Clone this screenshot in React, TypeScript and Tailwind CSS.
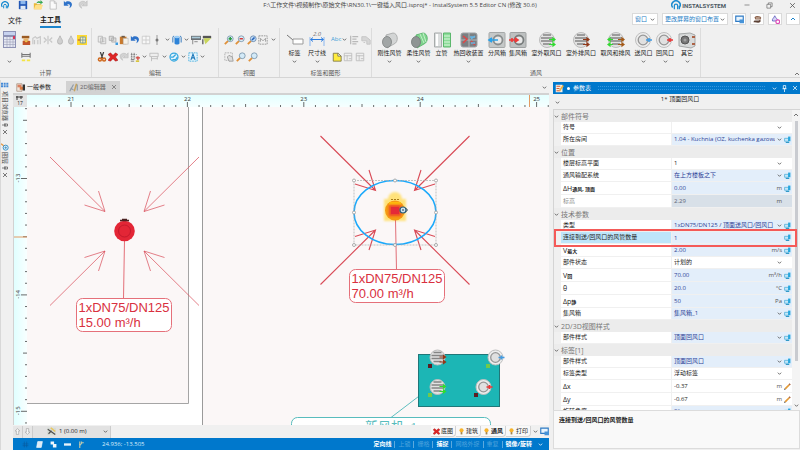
import type { ReactNode } from "react";

const glyphs: Record<string, ReactNode> = {
  chevron: <path d="M2 4l4 4 4-4" fill="none" stroke="#555" strokeWidth="2" />,
  chevronLight: <path d="M2 4l4 4 4-4" fill="none" stroke="#e8f4fc" strokeWidth="2" />,
  up: <path d="M2 8l4-4 4 4" fill="none" stroke="#1c84cc" strokeWidth="2" />,
  save: (
    <>
      <path d="M1 1h10v10H1z" fill="#2257b5" />
      <path d="M3 1h6v4H3z" fill="#8db8ec" />
      <path d="M3 7h6v4H3z" fill="#dfe9f5" />
    </>
  ),
  open: (
    <>
      <path d="M1 4h3l1 1h5v6H1z" fill="#e9b93a" />
      <path d="M1 11l2-5h9l-2 5z" fill="#ffe08a" />
      <path d="M4 4c1-3 4-3 5-2V0l3 3-3 2V4C7 3 6 3 4 4z" fill="#36a852" />
    </>
  ),
  doc: <path d="M2.500 1h5l2.500 2.500V11H2.500zM7.500 1v3H10" fill="#fafafa" stroke="#bdbdbd" />,
  undo: <path d="M1 1v6h6L5 5.500c2.500-1.500 4.500.5 2.500 4.500 5-3 4-8.500-1.500-8.500-1.500 0-2.500.6-3.300 1.500z" fill="#2e72c9" />,
  redo: <path d="M11 1v6H5l2-1.500C4.500 4 2.500 6 4.500 10c-5-3-4-8.500 1.500-8.500 1.500 0 2.500.6 3.300 1.500z" fill="#d2d2d2" stroke="#b5b5b5" strokeWidth=".6" />,
  copy: (
    <g fill="#ececec" stroke="#b5b5b5">
      <path d="M1.500 1.500h5v7h-5zM4.500 3.500h6v7h-6z" />
      <path d="M6 6h3M6 8h3" />
    </g>
  ),
  copyAdd: (
    <>
      <path d="M1.500 1.500h5v5h-5zM4.500 3.500h5v5h-5z" fill="#dcdcdc" stroke="#a9a9a9" />
      <path d="M9 9h3v3H9z" fill="#3c9be0" />
    </>
  ),
  paste: (
    <>
      <path d="M1 2h8v9H1z" fill="#c9792b" />
      <path d="M3 1h4v2H3z" fill="#6b5b4b" />
      <path d="M5 4h6v7H5z" fill="#f5f1e8" stroke="#999" strokeWidth=".5" />
    </>
  ),
  panes: <path d="M1.500 1.500h9v9h-9zM6 1v10M2 6h8" fill="#f7f7f7" stroke="#c8c8c8" />,
  node: (
    <>
      <path d="M6 0v12" stroke="#8a8a8a" />
      <circle cx="6" cy="6" r="1.800" fill="#777" />
    </>
  ),
  cylinder: (
    <>
      <path d="M3 2h6v8c0 2-6 2-6 0z" fill="#2d83d8" />
      <ellipse cx="6" cy="2.500" rx="3" ry="1.500" fill="#9bcdf6" />
      <path d="M1 3l1-2M11 3l-1-2M1 3v6M11 3v6" stroke="#1565b5" />
    </>
  ),
  roller: (
    <>
      <path d="M0 1h12v5H0z" fill="#6a7074" />
      <path d="M1 2h10v2H1z" fill="#aac9d8" />
      <path d="M2 6v5M4 8h4" stroke="#a0a0a0" strokeWidth="1.500" />
    </>
  ),
  funnel: (
    <>
      <path d="M1 1h10v3H1z" fill="#555" />
      <path d="M2 4h9l-7 7z" fill="#c9d65b" />
      <path d="M1 5v6" stroke="#555" strokeWidth="1.500" />
    </>
  ),
  cut: (
    <>
      <path d="M4 0l3 8M8 0L5 8" stroke="#404040" strokeWidth="1.500" />
      <circle cx="3.500" cy="9" r="1.800" fill="none" stroke="#cf6a1f" strokeWidth="1.800" />
      <circle cx="8.500" cy="9" r="1.800" fill="none" stroke="#cf6a1f" strokeWidth="1.800" />
    </>
  ),
  erase: <path d="M0 3l3-2 3 3 3-3 3 2-3 3 3 4-3 1-3-3-3 3-3-1 3-4z" fill="#df2525" stroke="#8f1111" strokeWidth=".5" />,
  grid: (
    <>
      <path d="M1 3h7M1 6h7M2 1v8M5 1v8" stroke="#777" strokeDasharray="2 1" />
      <path d="M7 7h5M9.500 5v5" stroke="#d2423a" strokeWidth="1.500" />
      <path d="M7 10h4v2H7z" fill="#d8c53d" />
      <path d="M1 9h4M1 11h4" stroke="#888" strokeWidth="1.200" />
    </>
  ),
  align: <path d="M1 1.500h10v4H1zM3 8h7M3 6v5M10 6v3" fill="#eee" stroke="#b8b8b8" />,
  edit: (
    <>
      <circle cx="6" cy="6" r="4.800" fill="#e4f4fc" stroke="#35a7df" strokeWidth="1.500" />
      <path d="M2 6h3l3-3M4 9h4l2-3" fill="none" stroke="#35a7df" strokeWidth="1.500" />
    </>
  ),
  selectA: (
    <>
      <path d="M1 1h10v10H1z" fill="#e5f5fd" stroke="#3aaade" strokeDasharray="2 1" />
      <path d="M3.500 9.500L6 2.500l2.500 7M4.500 7h3" fill="none" stroke="#1976b8" strokeWidth="1.300" />
    </>
  ),
  zoomIn: (
    <>
      <path d="M5 7l-4 4" stroke="#e0913a" strokeWidth="2.200" />
      <circle cx="7.500" cy="4.500" r="3.500" fill="#d9edf8" stroke="#7894aa" />
      <path d="M5.500 4.500h4M7.500 2.500v4" stroke="#2a9a43" strokeWidth="1.800" />
    </>
  ),
  zoomOut: (
    <>
      <path d="M5 7l-4 4" stroke="#e0913a" strokeWidth="2.200" />
      <circle cx="7.500" cy="4.500" r="3.500" fill="#d9edf8" stroke="#7894aa" />
      <path d="M5.500 4.500h4" stroke="#d43a3a" strokeWidth="1.800" />
    </>
  ),
  zoomAll: (
    <>
      <path d="M5 7l-4 4" stroke="#e0913a" strokeWidth="2.200" />
      <circle cx="7.500" cy="4.500" r="3.500" fill="#bfdcf8" stroke="#6a88ab" />
      <path d="M6 6l3-3" stroke="#2763b8" strokeWidth="2" />
    </>
  ),
  zoom: (
    <>
      <path d="M5 7l-4 4" stroke="#e0913a" strokeWidth="2.200" />
      <circle cx="7.500" cy="4.500" r="3.500" fill="#d3eaf8" stroke="#7894aa" />
    </>
  ),
  frame: (
    <>
      <path d="M1 1h10v10H1z" fill="none" stroke="#8b8b8b" strokeDasharray="2 1" />
      <path d="M3 8V4l3 3 3-3v4" fill="none" stroke="#9a9a9a" />
    </>
  ),
  hand: (
    <>
      <path d="M1 1h9v9H1z" fill="none" stroke="#aaa" strokeDasharray="2 1" />
      <path d="M4 6l2-2 4 2 1 5H6z" fill="#ddd" stroke="#999" />
    </>
  ),
  person: (
    <>
      <path d="M1 1h9v3H1z" fill="#9b5b24" />
      <path d="M3 4h6v3H3z" fill="#e8b26a" />
      <path d="M2 7h9v5H2z" fill="#c0542c" />
      <path d="M4 7l2 2 3-2" fill="#f3d04d" />
    </>
  ),
  building: <path d="M1 11V4l3-2 2 2 4-2v9M3 6v5M7 6v5" fill="#ececec" stroke="#c6c6c6" strokeWidth="1.300" />,
  cross: <path d="M1 3l3 3-3 3M11 3L8 6l3 3M6 1v10" fill="none" stroke="#c8c8c8" strokeWidth="1.500" />,
  drop: <path d="M6 1c1 3 3 4 3 7a3 3 0 01-6 0c0-3 2-4 3-7z" fill="#d0d0d0" stroke="#b2b2b2" />,
  network: (
    <>
      <path d="M0 0h12v12H0z" fill="#ffd92e" />
      <path d="M4 2.500h6v7H4zM1 6h10M7 2v8" fill="#fff3ba" stroke="#6f97a6" />
      <path d="M1 6h3" stroke="#e06d24" strokeWidth="1.500" />
    </>
  ),
  gauge: (
    <>
      <path d="M1 1v6M11 1v6M1 3h10M1 5h10" stroke="#777" strokeWidth="1.300" />
      <path d="M1 9h4v2H1zM7 9h4v2H7z" fill="#f4e445" />
    </>
  ),
  note: <path d="M1.500 1.500h6L11 5v6H1.500zM7 1.500V5h4" fill="#ffec3d" stroke="#777148" />,
  list: <path d="M2 1v10M4 2h7M4 5h5M4 8h7M4 10.500h5" fill="none" stroke="#b9b9b9" strokeWidth="1.500" />,
  shapeGrey: <path d="M1 2h5l5 4v5H7V7H1zM3 9h2" fill="#d6d6d6" stroke="#c0c0c0" />,
  panelGrey: <path d="M1.500 1.500h9v9h-9zM1.500 4.500h9M5 4v6M7 8h3" fill="#efefef" stroke="#bababa" />,
  screen: (
    <>
      <path d="M1 1.500h10v7H1z" fill="#e8f4fd" stroke="#2f7ac4" strokeWidth="1.500" />
      <path d="M6 6h6v5H6z" fill="#4693d8" />
    </>
  ),
  scroll: (
    <>
      <path d="M2 3c2-3 9-2 9 1l-1 2H3z" fill="#8e654f" />
      <path d="M1 8c3-2 6 1 9-2v3c-3 3-6 0-9 1z" fill="#5b4034" />
      <path d="M4 4h5" stroke="#f0e4da" />
    </>
  ),
  paint: (
    <>
      <path d="M5 1c1 3 4 4 4 7H2c-1-3 2-4 3-7z" fill="#d7d5f5" stroke="#5350b8" />
      <circle cx="9" cy="9" r="2.500" fill="#fff" stroke="#dd4bb5" strokeWidth="1.500" />
    </>
  ),
  params: (
    <>
      <path d="M1 1h7v10H1z" fill="#efe5dd" stroke="#a89080" />
      <path d="M2 3h5M2 5h5" stroke="#d55e36" strokeWidth="1.500" />
      <path d="M5 5h5v4H5z" fill="#d97b43" />
      <path d="M9 2h3v8H9z" fill="#333" />
    </>
  ),
  form: (
    <>
      <path d="M1 1h9v10H1z" fill="#f6efe4" />
      <path d="M2 3h5M2 6h4M2 9h5" stroke="#d65b35" strokeWidth="1.500" />
      <path d="M11 2L6 9" stroke="#f3b13b" strokeWidth="2" />
    </>
  ),
  compass: (
    <>
      <path d="M1 11L6 2M2 7l4 2" fill="none" stroke="#8d99a5" strokeWidth="1.500" />
      <path d="M10 1L7 11" stroke="#c9a35d" strokeWidth="2" />
      <path d="M11 2v8" stroke="#64809b" />
    </>
  ),
  tableGrid: <path d="M0 1h3v3H0zM4 1h3v3H4zM8 1h3v3H8zM0 5h3v3H0zM4 5h3v3H4zM8 5h3v3H8z" fill="#4389d6" />,
  search: (
    <>
      <path d="M0 1l4 3" stroke="#e5953c" strokeWidth="2" />
      <circle cx="7" cy="7" r="3.800" fill="#e4f3fb" stroke="#3f93c7" strokeWidth="1.500" />
      <path d="M5 7h4M7 5v4" stroke="#3282b8" />
    </>
  ),
  pin: <path d="M4 1h4v5H4zM2.500 6.500h7M6 7v5" fill="none" stroke="currentColor" strokeWidth="1.300" />,
  close: <path d="M2 2l8 8M10 2l-8 8" stroke="currentColor" strokeWidth="1.400" />,
  min: <path d="M1 6h10" stroke="#555" strokeWidth="1.200" />,
  max: <path d="M1.500 4h6.500v6.500H1.500zM4 4V1.500h6.500V8H8" fill="none" stroke="#555" />,
  arrowUp: <path d="M6 1l4 4H8v6H4V5H2z" fill="#f6f6f6" stroke="#999" />,
  arrowDown: <path d="M6 11L2 7h2V1h4v6h2z" fill="#f6f6f6" stroke="#999" />,
  layer: (
    <>
      <path d="M0 1h12v10H0z" fill="#d7dcd7" />
      <path d="M1 3l10 7M2 9l4-4" stroke="#4d4d4d" strokeWidth="1.500" />
      <path d="M5 1l6 5" stroke="#ebc65c" strokeWidth="2" />
    </>
  ),
  bulb: (
    <>
      <circle cx="6" cy="4" r="3.500" fill="#f7b32c" />
      <path d="M4.500 7h3v4h-3z" fill="#a5854a" />
    </>
  ),
  link: (
    <>
      <path d="M1 4h7v5H1z" fill="#c7e9f9" stroke="#41a8d7" strokeWidth="1.200" />
      <path d="M7 1h4v8H7z" fill="#27a7de" />
      <path d="M3 11h6" stroke="#2794c4" strokeWidth="1.800" />
    </>
  ),
  pencil: (
    <>
      <path d="M2 10l7-7" stroke="#e49a35" strokeWidth="3" />
      <path d="M9 3l1.500-1.500" stroke="#a35a3a" strokeWidth="3" />
      <path d="M0 12l1-3 2 2z" fill="#555" />
    </>
  ),
  sheet: <path d="M3 1h8L9 11H1z" fill="#dcebf7" stroke="#fff" />,
  objects: <path d="M1 1h6v5H1zM5 5h6v6H5z" fill="#eef6fc" />,
  pill: <path d="M0 4h12v4H0z" fill="#e9f3fa" />,
  branch: <path d="M3 1v11M3 8l4-5h3M6 1v4" fill="none" stroke="#b9c5ad" strokeWidth="2" />,
  hash: <path d="M4 1v10M8 1v10M1 5h10M1 8h10" stroke="#075a9c" />,
};

function Icon({ name, className = "size-[9px]" }: { name: string; className?: string }) {
  return (
    <svg viewBox="0 0 12 12" className={`${className} shrink-0`} aria-hidden="true">
      {glyphs[name]}
    </svg>
  );
}

function Tick({ x, y, color, left = false }: { x: number; y: number; color: string; left?: boolean }) {
  return (
    <path
      d={left ? `M${x + 5} ${y}h-4M${x} ${y}l2-1.500v3z` : `M${x - 3} ${y}h5M${x + 3} ${y}l-2-1.500v3z`}
      fill={color}
      stroke={color}
      strokeWidth="1.200"
    />
  );
}

function Grille({ x, y, right, left }: { x: number; y: number; right?: string; left?: string }) {
  return (
    <g>
      <circle cx={x} cy={y} r="7.500" fill="#e2e2e2" stroke="#bcbcbc" />
      <path
        d={`M${x - 4} ${y - 5}h8M${x - 6} ${y - 2}h12M${x - 6} ${y + 1}h12M${x - 4} ${y + 4}h8`}
        stroke="#858585"
        strokeWidth="1.400"
      />
      {right && <Tick x={x + 5} y={y - 0.5} color={right} />}
      {right && <Tick x={x + 5} y={y + 4.5} color={right} />}
      {left && <Tick x={x - 8} y={y - 0.5} color={left} left />}
      {left && <Tick x={x - 8} y={y + 4.5} color={left} left />}
    </g>
  );
}

function Ring({ x, y, color }: { x: number; y: number; color: string }) {
  return (
    <g>
      <circle cx={x} cy={y} r="7.500" fill="#ededed" stroke="#bfbfbf" />
      <circle cx={x} cy={y} r="4.800" fill="#e0e0e0" stroke="#969696" strokeWidth="1.300" />
      <path d={`M${x + 3} ${y}h6M${x + 6} ${y - 2}v4`} stroke={color} strokeWidth="1.600" />
    </g>
  );
}

const devices: { label: string; width: string; menu?: boolean; art: ReactNode }[] = [
  {
    label: "刚性风管", width: "w-[29px]", menu: true,
    art: (
      <>
        <path d="M5 4l7-2c5 0 6 9 1 11l-7 4z" fill="#d3d5d5" stroke="#a1a3a3" strokeWidth=".8" />
        <ellipse cx="6" cy="11" rx="4.500" ry="5.500" fill="#a2a6a6" stroke="#7e8282" strokeWidth=".8" />
      </>
    ),
  },
  {
    label: "柔性风管", width: "w-[29px]", menu: true,
    art: (
      <>
        <path d="M6 4l7-2c5 0 6 9 1 11l-7 4z" fill="#7fd48e" stroke="#4fae63" strokeWidth=".8" />
        <path d="M10 3l4 9M13 2l3 9" stroke="#c2f0c7" />
        <ellipse cx="6" cy="11" rx="4.500" ry="5.500" fill="#8f9594" stroke="#737877" strokeWidth=".8" />
      </>
    ),
  },
  {
    label: "立管", width: "w-[17px]",
    art: (
      <>
        <path d="M1.500 2h7v14h-7z" fill="#dcdfdf" stroke="#a7abab" />
        <path d="M10.500 2h7v14h-7z" fill="#8bdc98" stroke="#5cb76d" />
        <path d="M11 5h6M11 8h6M11 11h6M11 14h6" stroke="#daf6dc" />
        <path d="M4 3v12" stroke="#fff" strokeWidth="2" />
      </>
    ),
  },
  {
    label: "热回收装置", width: "w-[37px]", menu: true,
    art: (
      <>
        <rect x="1" y="2" width="16" height="14" rx="2" fill="#7c8083" stroke="#9da1a4" />
        <path d="M9 2v14M1 9h16" stroke="#b4b7b9" />
        <path d="M3 5l4 3-4 4M15 14l-4-4" fill="none" stroke="#e24545" strokeWidth="1.500" />
        <path d="M15 5l-4 3M10 6h5M11 12h4" stroke="#66b5e5" strokeWidth="1.500" />
      </>
    ),
  },
  {
    label: "分风箱", width: "w-5",
    art: (
      <>
        <rect x="1" y="1.500" width="16" height="15" rx="1" fill="#c5c8c8" stroke="#a5a8a8" />
        <circle cx="10" cy="9" r="4.500" fill="#e8e8e8" stroke="#898d8d" strokeWidth="1.800" />
        <path d="M10 9H1M4 7L1 9l3 2" fill="none" stroke="#27a0e8" strokeWidth="1.600" />
      </>
    ),
  },
  {
    label: "集风箱", width: "w-[22px]",
    art: (
      <>
        <rect x="1" y="1.500" width="16" height="15" rx="1" fill="#bdc0c0" stroke="#9fa2a2" />
        <circle cx="10" cy="9" r="4.500" fill="#e8e8e8" stroke="#797d7d" strokeWidth="1.800" />
        <path d="M0 9h9M6 7l3 2-3 2M3 7v4" fill="none" stroke="#ee3737" strokeWidth="1.600" />
      </>
    ),
  },
  { label: "室外取风口", width: "w-[35px]", art: <Grille x={9} y={9} right="#2fdc2f" /> },
  { label: "室外排风口", width: "w-[34px]", art: <Grille x={9} y={9} right="#91391a" /> },
  { label: "取风和排风", width: "w-[35px]", art: <Grille x={9} y={9} left="#35d833" right="#a45a18" /> },
  { label: "送风口", width: "w-[21px]", menu: true, art: <Ring x={8} y={9} color="#429be2" /> },
  { label: "回风口", width: "w-[22px]", menu: true, art: <Ring x={8} y={9} color="#ec3434" /> },
  {
    label: "其它", width: "w-[22px]", menu: true,
    art: (
      <>
        <path d="M1 3l11-1 5 2v11l-4 2-12-2z" fill="#d8dada" stroke="#a5a8a8" />
        <circle cx="7" cy="9" r="4" fill="#777" stroke="#555" />
        <circle cx="7" cy="9" r="1.500" fill="#a2a2a2" />
        <path d="M14 6h3M14 13h3" stroke="#ad6346" strokeWidth="1.800" />
      </>
    ),
  },
];

function isMenu(name: string) {
  return name.startsWith("chevron");
}

function ToolRow({ names, className }: { names: string[]; className: string }) {
  return (
    <div className={`flex h-[17px] items-center justify-between ${className}`}>
      {names.map((name, i) => (
        <button
          key={i}
          aria-label={name}
          className={isMenu(name) ? "flex w-2 justify-center" : "flex w-[11px] justify-center"}
        >
          <Icon name={name} className={isMenu(name) ? "size-[5px]" : "size-[10px]"} />
        </button>
      ))}
    </div>
  );
}

function Group({ title, className, children }: { title: string; className: string; children: ReactNode }) {
  return (
    <section className={`flex shrink-0 flex-col border-r border-[#dcdcdc] ${className}`}>
      <div className="flex flex-1 pt-[3px]">{children}</div>
      <h2 className="h-2 text-center text-[6px] leading-2 text-[#555]">{title}</h2>
    </section>
  );
}

function Ribbon() {
  return (
    <div className="flex h-[50px] shrink-0 border-b border-[#d5d5d5] bg-[#f0f0f0]">
      <Group title="计算" className="w-[92px]">
        <button aria-label="计算" className="flex w-[18px] flex-col items-center pl-px">
          <svg viewBox="0 0 13 17" className="h-[17px] w-[13px]">
            <path d="M0 0h13v17H0z" fill="#8d92b5" />
            <path d="M1 1h11v3H1z" fill="#c7d2ef" />
            <path d="M1 6h11v10H1z" fill="#e4e7f2" />
            <path d="M1 8.500h11M1 11h11M1 13.500h11M4 6v10M7 6v10M10 6v10" stroke="#9ba0b7" strokeWidth=".6" />
            <path d="M10 5h2v3h-2z" fill="#d7375a" />
          </svg>
          <Icon name="chevron" className="mt-[11px] size-[5px]" />
        </button>
        <div className="pl-[2px]">
          <ToolRow names={["person", "building", "cross", "drop", "drop", "network"]} className="w-[68px]" />
          <ToolRow names={["gauge"]} className="w-[11px]" />
        </div>
      </Group>
      <Group title="编辑" className="w-[127px]">
        <div className="pl-1">
          <ToolRow
            names={["copy", "copyAdd", "paste", "undo", "panes", "node", "chevron", "cylinder", "chevron", "roller", "funnel"]}
            className="w-[117px]"
          />
          <ToolRow
            names={["cut", "erase", "redo", "grid", "chevron", "align", "chevron", "edit", "chevron", "selectA", "chevron"]}
            className="w-[111px]"
          />
        </div>
      </Group>
      <Group title="视图" className="w-[61px]">
        <div className="pl-1">
          <ToolRow names={["zoomIn", "zoomOut", "zoomAll", "frame", "chevron"]} className="w-[54px]" />
          <ToolRow names={["hand", "zoom", "zoom"]} className="w-[35px]" />
        </div>
      </Group>
      <Group title="标签和图形" className="w-[92px]">
        <button className="flex w-[28px] flex-col items-center pl-[2px] text-[6px] leading-2">
          <svg viewBox="0 0 18 18" className="size-[18px]">
            <path d="M1 4l6 5" stroke="#777" />
            <path d="M7 8h10v5H7z" fill="#fff" stroke="#9a9a9a" />
          </svg>
          标签
          <Icon name="chevron" className="mt-[2px] size-[5px]" />
        </button>
        <button className="flex w-5 shrink-0 flex-col items-center whitespace-nowrap text-[6px] leading-2">
          <svg viewBox="0 0 18 18" className="size-[18px]">
            <text x="5" y="5" fontSize="6" fontStyle="italic" fill="#777">2.0</text>
            <path d="M2 6v9M16 6v9" stroke="#8ab6ee" />
            <path d="M3 8.500h12M5 6.500l-2.500 2 2.500 2M13 6.500l2.500 2-2.500 2" fill="none" stroke="#2b7de0" />
          </svg>
          尺寸线
          <Icon name="chevron" className="mt-[2px] size-[5px]" />
        </button>
        <div className="pl-1">
          <div className="flex items-center">
            <button className="flex w-[17px] items-center gap-px text-[6px] text-[#3f9fd8]">
              Abc <Icon name="chevron" className="size-[5px]" />
            </button>
            <ToolRow names={["list", "shapeGrey"]} className="w-[23px]" />
          </div>
          <ToolRow names={["note", "panelGrey", "panelGrey"]} className="w-[34px]" />
        </div>
      </Group>
      <Group title="通风" className="w-[329px]">
        <div className="flex pl-[3px]">
          {devices.map((d) => (
            <button key={d.label} className={`flex shrink-0 flex-col items-center whitespace-nowrap text-[6px] leading-2 ${d.width}`}>
              <svg viewBox="0 0 18 18" className="size-[18px] overflow-visible">{d.art}</svg>
              {d.label}
              {d.menu && <Icon name="chevron" className="mt-[2px] size-[5px]" />}
            </button>
          ))}
        </div>
      </Group>
      <div className="flex flex-1 items-end justify-end">
        <button aria-label="折叠"><Icon name="up" className="size-[6px] grayscale" /></button>
      </div>
    </div>
  );
}

function Logo({ className }: { className: string }) {
  return (
    <svg viewBox="0 0 12 12" className={className} aria-hidden="true">
      <path d="M2 9a5 5 0 118 0" fill="none" stroke="#1b8bd0" strokeWidth="1.800" />
      <path d="M4 11V7a2 2 0 014 0v4M10 7v4" fill="none" stroke="#1b8bd0" strokeWidth="1.500" />
    </svg>
  );
}

function TitleBar() {
  return (
    <header className="relative flex h-[10px] shrink-0 items-center justify-between pl-px pr-1">
      <div className="flex items-center gap-[5px]">
        <Logo className="mr-1 size-2" />
        {["save", "open", "doc", "undo", "redo"].map((name) => (
          <button key={name} aria-label={name}><Icon name={name} className="size-[10px]" /></button>
        ))}
      </div>
      <h1 className="absolute inset-x-0 text-center text-[6px] leading-[9px] text-[#444]">
        F:\工作文件\视频制作\原始文件\RN30.1\一键插入风口.isproj* - InstalSystem 5.5 Editor CN (修改 30.6)
      </h1>
      <div className="flex items-center">
        <Logo className="size-[10px]" />
        <span className="mr-[18px] pl-px font-['Roboto',sans-serif] text-[6px] font-bold text-[#4d5963]">INSTALSYSTEM</span>
        <div className="flex gap-4 text-[#555]">
          <button aria-label="最小化"><Icon name="min" className="size-[6px]" /></button>
          <button aria-label="还原"><Icon name="max" className="size-[7px]" /></button>
          <button aria-label="关闭"><Icon name="close" className="size-[7px]" /></button>
        </div>
      </div>
    </header>
  );
}

function MenuBar() {
  return (
    <nav className="flex h-[18px] shrink-0 items-center justify-between pl-2 text-[7px]">
      <div className="flex gap-[18px] self-stretch">
        <button className="pt-[2px]">文件</button>
        <button className="border-b-2 border-[#1c84cc] pt-[2px] font-bold">主工具</button>
      </div>
      <div className="flex h-3 gap-1 text-[6px] text-[#1c7cc4]">
        <button className="flex items-center gap-[3px] border border-[#dadada] bg-white px-[2px]">
          窗口 <Icon name="chevron" className="size-[5px]" />
        </button>
        <button className="flex items-center gap-px border border-[#dadada] bg-white px-[2px]">
          更改屏幕的窗口布置 <Icon name="chevron" className="size-[5px]" />
        </button>
        {["screen", "scroll", "paint", "up"].map((name) => (
          <button key={name} aria-label={name} className="flex w-[14px] items-center justify-center border border-[#dadada] bg-white">
            <Icon name={name} className={name === "up" ? "size-[6px]" : "size-[9px]"} />
          </button>
        ))}
      </div>
    </nav>
  );
}

function SideRail() {
  return (
    <aside className="flex w-[13px] shrink-0 flex-col items-center border-l border-[#d8d8d8] pr-1 pt-[2px] text-[#444]">
      {[
        { icon: "tableGrid", label: "项目浏览器" },
        { icon: "search", label: "图层" },
      ].map((tab) => (
        <div key={tab.label} className="mb-2 flex flex-col items-center gap-px">
          <Icon name={tab.icon} className="size-2" />
          <button className="text-[6px] leading-2 [text-orientation:sideways] [writing-mode:vertical-rl]">{tab.label}</button>
          <Icon name="pin" className="size-[6px] rotate-90" />
          <button aria-label={`关闭${tab.label}`}><Icon name="close" className="size-[6px]" /></button>
        </div>
      ))}
    </aside>
  );
}

const unit = 116.4;

function TopRuler() {
  const ticks = Array.from({ length: 46 }, (_, i) => i - 3);
  return (
    <svg viewBox="27 95 522 12" preserveAspectRatio="xMinYMin slice" className="h-3 min-w-0 flex-1 bg-linear-to-b from-[#e4ffff] to-[#f6ffff]">
      {ticks.map((i) => {
        const x = 71 + (i * unit) / 10;
        const size = i % 10 === 0 ? 5 : i % 5 === 0 ? 3 : 2;
        return <path key={i} d={`M${x} ${107 - size}v${size}`} stroke="#444" strokeWidth=".8" />;
      })}
      {[21, 22, 23, 24, 25].map((n, i) => (
        <text key={n} x={71 + i * unit} y="101" fontSize="6" textAnchor="middle" fill="#333">{n}</text>
      ))}
      <path d="M529.500 95v12" stroke="#e39a62" />
    </svg>
  );
}

function LeftRuler() {
  const ticks = Array.from({ length: 28 }, (_, i) => i - 6);
  return (
    <svg viewBox="14 107 13 318" preserveAspectRatio="xMinYMin slice" className="w-[13px] shrink-0 bg-linear-to-r from-[#e0ffff] to-[#f8ffff]">
      {ticks.map((i) => {
        const y = 178.5 + (i * unit) / 10;
        const size = i % 10 === 0 ? 6 : i % 5 === 0 ? 4 : 2;
        return <path key={i} d={`M${27 - size} ${y}h${size}`} stroke="#444" strokeWidth=".8" />;
      })}
      {[-13, -14, -15].map((n, i) => (
        <text
          key={n}
          transform={`translate(20 ${178 + i * unit}) rotate(-90)`}
          fontSize="6"
          textAnchor="middle"
          fill="#333"
        >
          {n}
        </text>
      ))}
      <path d="M14 237h13" stroke="#e39a62" />
    </svg>
  );
}

// Four flow arrows around a ceiling terminal
function FlowArrows({ cx, cy, width }: { cx: number; cy: number; width: number }) {
  return (
    <g transform={`translate(${cx} ${cy})`} fill="none" stroke="#d94b57" strokeWidth={width}>
      <path d="M-74.500-74l55 54.500M-26-40l6.500 20.500-20.500-6.500" />
      <path d="M74.500-74l-55 54.500M26-40l-6.500 20.500 20.500-6.500" />
      <path d="M-74.500 74.500l55-54.500M-26 40l6.500-20-20.500 6.500" />
      <path d="M74.500 74.500l-55-54.500M26 40l-6.500-20 20.500 6.500" />
    </g>
  );
}

function Callout({ x, y, flow }: { x: number; y: number; flow: string }) {
  return (
    <g>
      <rect x={x} y={y} width="95" height="33" rx="6" fill="#fff" stroke="#e5707a" />
      <g fontFamily="Liberation Sans, sans-serif" fontSize="13" fill="#d93040">
        <text x={x + 2} y={y + 13}>1xDN75/DN125</text>
        <text x={x + 2} y={y + 28}>{flow}</text>
      </g>
    </g>
  );
}

function Drawing() {
  const handles = [
    [354, 180.5], [395, 180.5], [436, 180.5], [354, 212.5],
    [436, 212.5], [354, 245], [395, 245], [436, 245],
  ];
  return (
    <svg viewBox="27 107 522 318" preserveAspectRatio="xMinYMin slice" className="h-full min-w-0 flex-1 bg-white">
      <path d="M20 100h168.500v303.500H20z" fill="#fbf7f7" stroke="#a5a5a5" />
      <path d="M202.500 100h600v500h-600z" fill="#fbf7f7" stroke="#9a9a9a" />

      <FlowArrows cx={124.5} cy={231} width={0.7} />
      <path d="M124.500 240l-1 59" stroke="#dd4b57" strokeWidth=".8" />
      <circle cx="124.500" cy="231" r="10.300" fill="#e32636" />
      <circle cx="124.500" cy="231" r="6" fill="none" stroke="#bd1728" strokeWidth=".8" />
      <path d="M120 220.500h9M122 219.500h5" stroke="#4b2222" strokeWidth="1.500" />
      <Callout x={76.5} y={298.5} flow="15.00 m³/h" />

      <defs>
        <filter id="soft" x="-20%" y="-20%" width="140%" height="140%">
          <feGaussianBlur stdDeviation="1" />
        </filter>
      </defs>
      <g filter="url(#soft)" fill="#ffe27a">
        <rect x="384" y="199" width="22" height="22" />
        <circle cx="395" cy="199" r="7" />
      </g>
      <FlowArrows cx={395} cy={210} width={1.1} />
      <path d="M395.500 220l1 50" stroke="#d94b57" strokeWidth=".8" />
      <circle cx="395" cy="210.500" r="10" fill="#f59a13" />
      <path d="M389 203.500h12" stroke="#fdb90c" strokeWidth="3" />
      <g filter="url(#soft)">
        <rect x="389" y="205" width="12" height="11" fill="#ee4a26" />
      </g>
      <rect x="391" y="207" width="8" height="7" fill="#e42a38" />
      <path d="M391 199.500h9" stroke="#a77c18" strokeDasharray="2 1" strokeWidth="1.200" />
      <circle cx="403" cy="210" r="3" fill="#cfe4ee" stroke="#2b6080" strokeWidth="1.200" />
      <path d="M405.500 208l2 2-2 2M402 210h2" fill="none" stroke="#2b4354" />
      <ellipse cx="395" cy="212.500" rx="41" ry="32" fill="none" stroke="#1ba9fb" strokeWidth="1.600" />
      <rect x="354" y="180.500" width="82" height="64.500" fill="none" stroke="#aaa" strokeWidth=".7" strokeDasharray="2 1" />
      {handles.map(([x, y]) => (
        <circle key={`${x}-${y}`} cx={x} cy={y} r="1.500" fill="#fff" stroke="#999" strokeWidth=".8" />
      ))}
      <Callout x={349.5} y={269.5} flow="70.00 m³/h" />

      <path d="M418.500 396.500L391 417.500" stroke="#5fbfc0" />
      <rect x="418.500" y="354.500" width="81" height="52" fill="#1cb6b5" stroke="#207779" />
      <Grille x={437.5} y={357.5} right="#91391a" />
      <Ring x={495.5} y={357.5} color="#429be2" />
      <Grille x={437.5} y={387} right="#2fdc2f" />
      <Ring x={483.5} y={387} color="#ec3434" />
      <path d="M428 364h4v4h-4zM474 393h4v4h-4z" fill="#5b1d22" />
      <path d="M486 364h4v4h-4zM428 393h4v4h-4z" fill="#72c94a" />
      <rect x="291.500" y="417.500" width="199" height="30" rx="6" fill="#fff" stroke="#58bcbd" />
      <text x="365" y="431" fontSize="13" fill="#58bcbd" fontFamily="Liberation Serif, Noto Sans CJK SC, serif">新风机_1</text>
    </svg>
  );
}

const layers = [
  { label: "底图", icon: "erase" },
  { label: "建筑", icon: "bulb" },
  { label: "通风", icon: "bulb", active: true },
  { label: "打印", icon: "bulb" },
];

const modes = [
  { label: "定向线", on: true },
  { label: "上锁" },
  { label: "栅格" },
  { label: "捕捉", on: true },
  { label: "网格外捉" },
  { label: "重复" },
  { label: "镜像/旋转", on: true },
];

function Editor() {
  return (
    <main className="flex min-w-0 flex-1 flex-col">
      <div className="flex h-[15px] shrink-0 items-end border-b-2 border-[#d2d2d2] pl-[3px] text-[6px]">
        <button className="flex h-3 w-[50px] items-center gap-[2px]">
          <Icon name="params" className="size-[9px]" /> 一般参数
        </button>
        <div className="flex h-3 w-[54px] items-center justify-between bg-[#d2d2d2] px-[3px] text-[#666]">
          <button className="flex items-center gap-[2px]">
            <Icon name="compass" className="size-[9px]" /> 2D编辑器
          </button>
          <button aria-label="关闭"><Icon name="close" className="size-[6px]" /></button>
        </div>
        <button aria-label="更多" className="mb-[3px] ml-auto mr-[2px]"><Icon name="chevron" className="size-[5px]" /></button>
      </div>
      <div className="flex h-3 shrink-0">
        <div className="flex w-[14px] flex-col items-center bg-[#e3e3e3] text-[5px] leading-[6px]">
          <svg viewBox="0 0 8 4" className="mt-px h-1 w-2">
            <path d="M0 1h7M1 0v4M5 0v3" stroke="#333" />
          </svg>
          17
        </div>
        <TopRuler />
      </div>
      <div className="flex min-h-0 flex-1 border-l border-[#d2d2d2]">
        <LeftRuler />
        <Drawing />
      </div>
      <div className="flex h-[13px] shrink-0 items-center text-[6px]">
        {["arrowUp", "arrowDown"].map((name) => (
          <button key={name} aria-label={name} className="flex h-3 w-[10px] items-center justify-center border-r border-[#ccc] bg-[#e6e6e6]">
            <Icon name={name} className="size-[7px]" />
          </button>
        ))}
        <div className="flex h-3 w-[78px] items-center gap-[3px] border-r border-[#ccc] bg-[#e2e2e2] pl-[14px] pr-[2px]">
          <Icon name="layer" className="size-[9px]" />
          <select aria-label="楼层" className="min-w-0 flex-1 appearance-none bg-transparent">
            <option>1 (0.00 m)</option>
          </select>
          <Icon name="chevron" className="size-[5px]" />
        </div>
        <div className="ml-auto flex items-center">
          {layers.map((l) => (
            <button
              key={l.label}
              className={`flex h-[11px] w-[25px] items-center justify-center gap-px rounded-br border-b border-r border-[#d2d2d2] bg-[#f8f8f8] ${l.active ? "font-bold" : ""}`}
            >
              <Icon name={l.icon} className="size-[7px]" /> {l.label}
            </button>
          ))}
          <button aria-label="更多图层" className="mx-[2px]"><Icon name="chevron" className="size-[5px]" /></button>
          <button aria-label="屏幕"><Icon name="screen" className="size-[9px]" /></button>
        </div>
      </div>
      <footer className="flex h-3 shrink-0 items-center justify-between bg-[#0078cc] pl-[9px] pr-[6px] text-[6px] text-white">
        <div className="flex items-center gap-[7px]">
          {["hash", "sheet", "objects", "pill", "branch"].map((name) => (
            <button key={name} aria-label={name}><Icon name={name} className="size-[7px]" /></button>
          ))}
          <span className="pl-[10px] text-[#d8edfb]">24.936; -13.505</span>
        </div>
        <div className="flex items-center">
          {modes.map((m) => (
            <button
              key={m.label}
              className={`border-r border-[#5ca9de] px-[3px] leading-[7px] last-of-type:border-0 last-of-type:pr-0 ${m.on ? "font-bold" : "text-[#4ea3dd]"}`}
            >
              {m.label}
            </button>
          ))}
          <Icon name="chevronLight" className="ml-[6px] size-[5px]" />
        </div>
      </footer>
    </main>
  );
}

type Row = {
  group?: string;
  label?: string;
  sub?: string;
  value?: string;
  unit?: string;
  kind?: "select" | "input";
  blue?: boolean;
  disabled?: boolean;
  active?: boolean;
  end?: "link" | "pencil";
};

const rows: Row[] = [
  { group: "部件符号" },
  { label: "符号", value: "", kind: "select" },
  { label: "所在房间", value: "1.04 - Kuchnia (OZ, kuchenka gazowa)", kind: "select", blue: true, end: "link" },
  { group: "位置" },
  { label: "楼层标高平面", value: "1", kind: "select" },
  { label: "通风输配系统", value: "在上方楼板之下", kind: "select", blue: true, end: "link" },
  { label: "ΔH", sub: "通风, 顶面", value: "0.00", unit: "m", blue: true, end: "link" },
  { label: "标高", value: "2.29", unit: "m", disabled: true },
  { group: "技术参数" },
  { label: "类型", value: "1xDN75/DN125 / 顶面送风口/回风口", kind: "select", blue: true, end: "link" },
  { label: "连接到送/回风口的风管数量", value: "1", kind: "input", blue: true, active: true, end: "link" },
  { label: "V", sub: "最大", value: "2.00", unit: "m/s", blue: true, end: "link" },
  { label: "部件状态", value: "计划的", kind: "select" },
  { label: "V", sub: "回", value: "70.00", unit: "m³/h", blue: true, end: "link" },
  { label: "θ", value: "20.0", unit: "°C", blue: true, end: "link" },
  { label: "Δp", sub: "静", value: "50", unit: "Pa", blue: true, end: "link" },
  { label: "集风箱", value: "集风箱_1", kind: "select", blue: true, end: "link" },
  { group: "2D/3D视图样式" },
  { label: "部件样式", value: "顶面回风口", kind: "select", blue: true, end: "link" },
  { group: "标签[1]" },
  { label: "部件样式", value: "顶面回风口", kind: "select", blue: true, end: "link" },
  { label: "标签类型", value: "浮动标签", kind: "select" },
  { label: "Δx", value: "-0.37", unit: "m", end: "pencil" },
  { label: "Δy", value: "-0.67", unit: "m", end: "pencil" },
  { label: "旋转角度", value: "0°", kind: "select", blue: true, end: "link" },
];

function PropertyRow({ row, id }: { row: Row; id: string }) {
  if (row.group) {
    return (
      <button className="flex h-3 w-full items-center gap-[2px] bg-[#ececec] text-[7px] text-[#777]">
        <Icon name="chevron" className="size-[5px]" /> {row.group}
      </button>
    );
  }
  const field = "h-full min-w-0 flex-1 bg-transparent";
  const tone = row.disabled ? "bg-[#d8e0e8] text-[#5d6678]" : row.blue ? "bg-[#e3eefa] text-[#2c3e96]" : "bg-white text-[#222]";
  return (
    <div className={`relative flex pl-[7px] ${row.unit ? "h-[13px]" : "h-3"}`}>
      <label
        htmlFor={id}
        className={`flex w-[111px] shrink-0 items-center whitespace-nowrap border-b border-r border-[#f0f0f0] pl-[2px] ${
          row.active ? "bg-[#bee5fa]" : row.disabled ? "bg-white text-[#888]" : "bg-white"
        }`}
      >
        <span className={row.unit && !row.disabled ? "text-[7px]" : ""}>{row.label}</span>
        {row.sub && <span className="self-end text-[5px] font-bold leading-[9px]">{row.sub}</span>}
      </label>
      <div className={`flex min-w-0 flex-1 items-center gap-[2px] border-b border-[#f0f0f0] pl-[2px] pr-px ${tone}`}>
        {row.kind === "select" ? (
          <>
            <select id={id} className={`${field} appearance-none`}>
              <option>{row.value}</option>
            </select>
            <Icon name="chevron" className="size-[5px]" />
          </>
        ) : (
          <input id={id} defaultValue={row.value} disabled={row.disabled} className={field} />
        )}
        {row.unit && <span className="text-[#555]">{row.unit}</span>}
        {row.end ? <Icon name={row.end} className="size-[7px]" /> : <span className="w-[7px]" />}
      </div>
      {row.active && <div className="pointer-events-none absolute -inset-y-[3px] -right-[5px] left-0 z-10 border-2 border-[#f45a58]" />}
    </div>
  );
}

function Properties() {
  return (
    <aside className="flex w-[247px] shrink-0 flex-col pb-px pt-[2px] text-[6px]">
      <div className="flex h-3 shrink-0 items-center gap-[3px] bg-[#0078cc] px-[2px] text-white">
        <Icon name="form" className="size-[9px]" />
        <span className="size-[3px] rounded-full bg-white" />
        <h2>参数表</h2>
        <div className="mx-1 h-1 flex-1 border-y border-dotted border-[#3597dd]" />
        <button aria-label="菜单"><Icon name="chevronLight" className="size-[5px]" /></button>
        <button aria-label="固定"><Icon name="pin" className="mx-px size-[7px]" /></button>
        <button aria-label="关闭"><Icon name="close" className="size-[6px]" /></button>
      </div>
      <div className="relative flex h-4 shrink-0 items-center justify-center border-b border-[#d4d4d4]">
        <button aria-label="折叠" className="absolute bottom-1 left-[2px]"><Icon name="chevron" className="size-[5px]" /></button>
        <span className="pb-[5px] pl-[7px]">1* 顶面回风口</span>
      </div>
      <div className="flex min-h-0 flex-1 overflow-hidden border-l border-[#d4d4d4]">
        <div className="min-w-0 flex-1">
          {rows.map((row, i) => (
            <PropertyRow key={i} row={row} id={`prop-${i}`} />
          ))}
        </div>
        <div className="flex w-2 shrink-0 flex-col items-center gap-[3px] bg-[#f4f4f4] py-[2px]">
          <Icon name="up" className="size-[6px] grayscale" />
          <div className="h-[240px] w-[3px] bg-[#c9cbd0]" />
          <Icon name="chevron" className="mt-auto size-[5px]" />
        </div>
      </div>
      <p className="h-[39px] shrink-0 border border-[#dcdcdc] bg-[#f9f9f9] px-[5px] pt-1 font-bold leading-[10px]">
        连接到送/回风口的风管数量
      </p>
    </aside>
  );
}

export default function App() {
  return (
    <div className="flex h-screen flex-col overflow-hidden bg-[#f0f0f0] font-['Open_Sans','Noto_Sans_CJK_SC',sans-serif] leading-[9px] text-[#222]">
      <TitleBar />
      <MenuBar />
      <Ribbon />
      <div className="flex min-h-0 flex-1 gap-1 pt-[2px]">
        <div className="flex min-w-0 flex-1">
          <SideRail />
          <Editor />
        </div>
        <Properties />
      </div>
    </div>
  );
}
